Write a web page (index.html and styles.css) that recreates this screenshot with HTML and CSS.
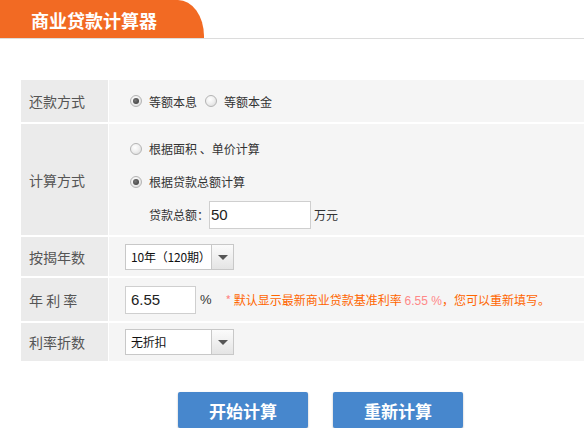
FILE: index.html
```html
<!DOCTYPE html>
<html lang="zh-CN">
<head>
<meta charset="utf-8">
<title>商业贷款计算器</title>
<link rel="stylesheet" href="styles.css">
</head>
<body>
<div class="header">
  <div class="tab">商业贷款计算器</div>
</div>
<div class="form">
  <div class="label">还款方式</div>
  <div class="cell row1">
    <span class="radio checked"></span><span class="opt">等额本息</span>
    <span class="radio"></span><span class="opt">等额本金</span>
  </div>

  <div class="label">计算方式</div>
  <div class="cell row2">
    <div class="line"><span class="radio"></span><span class="opt">根据面积 、单价计算</span></div>
    <div class="line"><span class="radio checked"></span><span class="opt">根据贷款总额计算</span></div>
    <div class="line amount">
      <span class="opt">贷款总额：</span><span class="input wide">50</span><span class="unit">万元</span>
    </div>
  </div>

  <div class="label">按揭年数</div>
  <div class="cell row3">
    <div class="select"><span class="sel-text">10年（120期）</span><span class="sel-arrow"></span></div>
  </div>

  <div class="label">年 利 率</div>
  <div class="cell row4">
    <span class="input narrow">6.55</span><span class="pct">%</span>
    <span class="note"><span class="star">*</span> 默认显示最新商业贷款基准利率 <span class="rate">6.55 %</span>，您可以重新填写。</span>
  </div>

  <div class="label">利率折数</div>
  <div class="cell row5">
    <div class="select"><span class="sel-text">无折扣</span><span class="sel-arrow"></span></div>
  </div>
</div>
<div class="actions">
  <button class="btn">开始计算</button>
  <button class="btn">重新计算</button>
</div>
</body>
</html>
```

FILE: styles.css
```css
html, body {
  margin: 0;
  padding: 0;
  background: #fff;
  overflow: hidden;
}
body {
  font-family: "Noto Sans CJK SC", "Liberation Sans", sans-serif;
  color: #333;
  width: 584px;
}
.header {
  height: 38px;
  border-bottom: 1px solid #dcdcdc;
}
.tab {
  width: 173px;
  height: 38px;
  padding-left: 31px;
  background: #f26a23;
  border-top-right-radius: 26px 36px;
  color: #fff;
  font-size: 18px;
  font-weight: bold;
  line-height: 40px;
}
.form {
  margin: 41px 0 0 21px;
  display: grid;
  grid-template-columns: 87px 1fr;
  grid-template-rows: 42px 111px 39px 43px 38px;
  gap: 2px 1px;
  background: #fff;
}
.label {
  background: #ebebeb;
  color: #555;
  font-size: 14px;
  padding-left: 8px;
  display: flex;
  align-items: center;
}
.cell {
  background: #f5f5f5;
  font-size: 12px;
  color: #333;
  display: flex;
  align-items: center;
}
.row1 {
  padding-left: 21px;
}
.row2 {
  flex-direction: column;
  align-items: flex-start;
  padding: 8px 0 4px 21px;
}
.line {
  height: 33px;
  display: flex;
  align-items: center;
}
.amount {
  padding-left: 19px;
}
.row3, .row4, .row5 {
  padding-left: 16px;
}
.radio {
  box-sizing: border-box;
  width: 12px;
  height: 12px;
  border-radius: 50%;
  border: 1px solid #b4b4b4;
  background: radial-gradient(circle at 40% 35%, #fff 0%, #f0f0f0 45%, #d6d6d6 100%);
  margin-right: 7px;
  position: relative;
  flex: none;
}
.radio.checked::after {
  content: "";
  position: absolute;
  left: 2px;
  top: 2px;
  width: 6px;
  height: 6px;
  border-radius: 50%;
  background: radial-gradient(circle at 40% 40%, #777 0%, #333 100%);
}
.opt {
  margin-right: 8px;
  white-space: nowrap;
}
.input {
  box-sizing: border-box;
  height: 28px;
  border: 1px solid #cfcfcf;
  background: #fff;
  font-family: "Liberation Sans", Arial, sans-serif;
  font-size: 15px;
  color: #222;
  line-height: 26px;
  padding-left: 1px;
}
.input.wide {
  width: 102px;
  margin-left: -8px;
}
.input.narrow {
  width: 71px;
  padding-left: 5px;
}
.unit {
  margin-left: 3px;
}
.pct {
  font-family: "Liberation Sans", Arial, sans-serif;
  font-size: 13px;
  color: #333;
  margin-left: 4px;
  margin-right: 14px;
}
.note {
  color: #f60;
  font-size: 12px;
  white-space: nowrap;
}
.star {
  color: #f88;
}
.rate {
  color: #f88;
  font-family: "Liberation Sans", Arial, sans-serif;
  font-size: 12px;
}
.select {
  box-sizing: border-box;
  width: 109px;
  height: 26px;
  border: 1px solid #c8c8c8;
  background: #fff;
  display: flex;
}
.sel-text {
  flex: 1;
  min-width: 0;
  font-size: 12px;
  line-height: 24px;
  padding-left: 5px;
  color: #111;
  white-space: nowrap;
  letter-spacing: -0.2px;
}
.sel-arrow {
  width: 21px;
  flex: none;
  border-left: 1px solid #c8c8c8;
  background: linear-gradient(#fbfbfb, #e4e4e4);
  position: relative;
}
.sel-arrow::after {
  content: "";
  position: absolute;
  left: 6px;
  top: 10px;
  border-left: 5px solid transparent;
  border-right: 5px solid transparent;
  border-top: 5px solid #555;
}
.actions {
  margin: 31px 0 0 178px;
  display: flex;
  gap: 25px;
}
.btn {
  width: 130px;
  height: 36px;
  border: none;
  border-radius: 2px;
  background: #4787cd;
  color: #fff;
  font-family: "Noto Sans CJK SC", sans-serif;
  font-size: 17px;
  font-weight: bold;
  box-shadow: 0 1px 2px rgba(0,0,0,0.3);
  padding: 0;
}
```
